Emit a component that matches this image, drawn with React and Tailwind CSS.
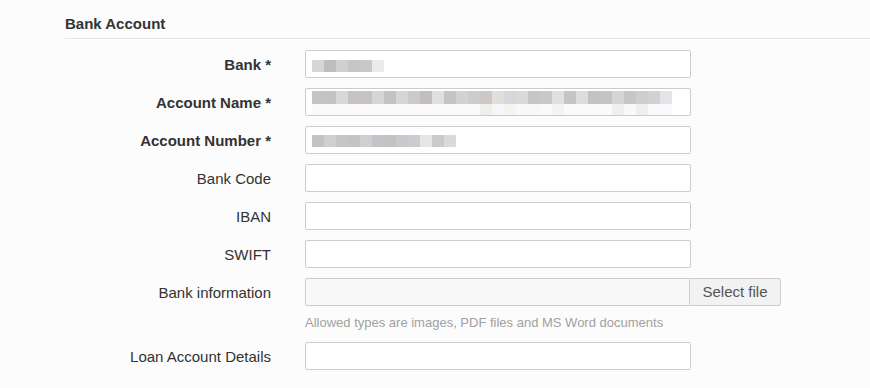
import React from "react";

const font = { fontFamily: '"Liberation Sans", Arial, sans-serif' };

function Pixels({ colors, className = "" }) {
  return (
    <div className={"flex h-[12px] " + className}>
      {colors.map((c, i) => (
        <div key={i} className="w-[12px] h-full" style={{ backgroundColor: c }} />
      ))}
    </div>
  );
}

const row1 = ["#d6d6d6", "#bdbdbd", "#d2d0cf", "#c6c6c8", "#c8c8ca", "#ebebeb"];
const row2 = [
  "#c4c4c4", "#c4c3c3", "#d8d8d8", "#c6c3c2", "#c6c3c2", "#d6d6d8", "#c4c1bf", "#d6d6d8",
  "#cbcac8", "#c2bec0", "#dfe0e3", "#c6c4c2", "#d3d2d0", "#cbcbd0", "#cdc8c6", "#e0dfdb",
  "#d6d6dc", "#dadadd", "#c6c6c6", "#c9c8c8", "#e0e0e0", "#c5c5c5", "#deddda", "#c2c4c3",
  "#c4c4c8", "#d8d4d2", "#c6c6c8", "#d1cdca", "#d2d2d6", "#e4e4e8",
];
const row2b = [
  "#fafafa", "#fafafa", "#fafafa", "#fafafa", "#fafafa", "#fafafa", "#fafafa", "#fafafa",
  "#fafafa", "#fafafa", "#fafafa", "#fafafa", "#fafafa", "#fafafa", "#eeeeee", "#f6f6f6",
  "#f5f4f2", "#f8f8f8", "#f8f8f8", "#fafafa", "#f3f3f3", "#fafafa", "#fafafa", "#fafafa",
  "#fafafa", "#efefef", "#f9f9f9", "#efefef", "#fafafa", "#fafafa",
];
const row3 = [
  "#c4c2c2", "#cfd1d0", "#c9c5c4", "#c4c4c4", "#cfcfd1", "#c4c4c8", "#c4c2c0", "#c9c9cd",
  "#ccccd0", "#e6e6e4", "#cacacc", "#dadada",
];

function Field({ label, required, children }) {
  return (
    <div className="flex items-center h-[28px]">
      <div
        className={
          "w-[206px] text-right text-[15px] leading-[17px] text-[#333] " +
          (required ? "font-bold" : "")
        }
      >
        {label}
        {required ? " *" : ""}
      </div>
      <div className="ml-[34px]">{children}</div>
    </div>
  );
}

function Input({ children }) {
  return (
    <div className="w-[386px] h-[28px] bg-white border border-[#cccccc] rounded-[2px] flex items-center pl-[6px] overflow-hidden">
      {children}
    </div>
  );
}

export default function App() {
  return (
    <div className="w-[870px] h-[388px] bg-[#fcfcfc] pl-[65px] overflow-hidden" style={font}>
      <div className="h-[39px] border-b border-[#e5e5e5] flex items-end pb-[6px]">
        <h3 className="text-[15px] font-bold text-[#333] leading-[17px]">Bank Account</h3>
      </div>
      <div className="flex flex-col gap-[10px] mt-[11px]">
        <Field label="Bank" required>
          <Input>
            <Pixels colors={row1} className="mt-[4px]" />
          </Input>
        </Field>
        <Field label="Account Name" required>
          <Input>
            <div className="flex flex-col mt-[3px]">
              <Pixels colors={row2} className="h-[13px]" />
              <Pixels colors={row2b} className="h-[10px]" />
            </div>
          </Input>
        </Field>
        <Field label="Account Number" required>
          <Input>
            <Pixels colors={row3} className="mt-[2px]" />
          </Input>
        </Field>
        <Field label="Bank Code">
          <Input />
        </Field>
        <Field label="IBAN">
          <Input />
        </Field>
        <Field label="SWIFT">
          <Input />
        </Field>
        <div>
          <Field label="Bank information">
            <div className="flex h-[28px]">
              <div className="w-[385px] h-[28px] bg-[#f9f9f9] border border-[#cccccc] rounded-l-[2px]" />
              <button className="h-[28px] w-[91px] bg-[#f2f2f2] border border-l-0 border-[#cccccc] rounded-r-[3px] text-[15px] text-[#555]">
                Select file
              </button>
            </div>
          </Field>
          <div className="ml-[240px] mt-[8px] mb-[1px] text-[13px] leading-[17px] text-[#a1a1a1]">
            Allowed types are images, PDF files and MS Word documents
          </div>
        </div>
        <Field label="Loan Account Details">
          <Input />
        </Field>
      </div>
    </div>
  );
}
